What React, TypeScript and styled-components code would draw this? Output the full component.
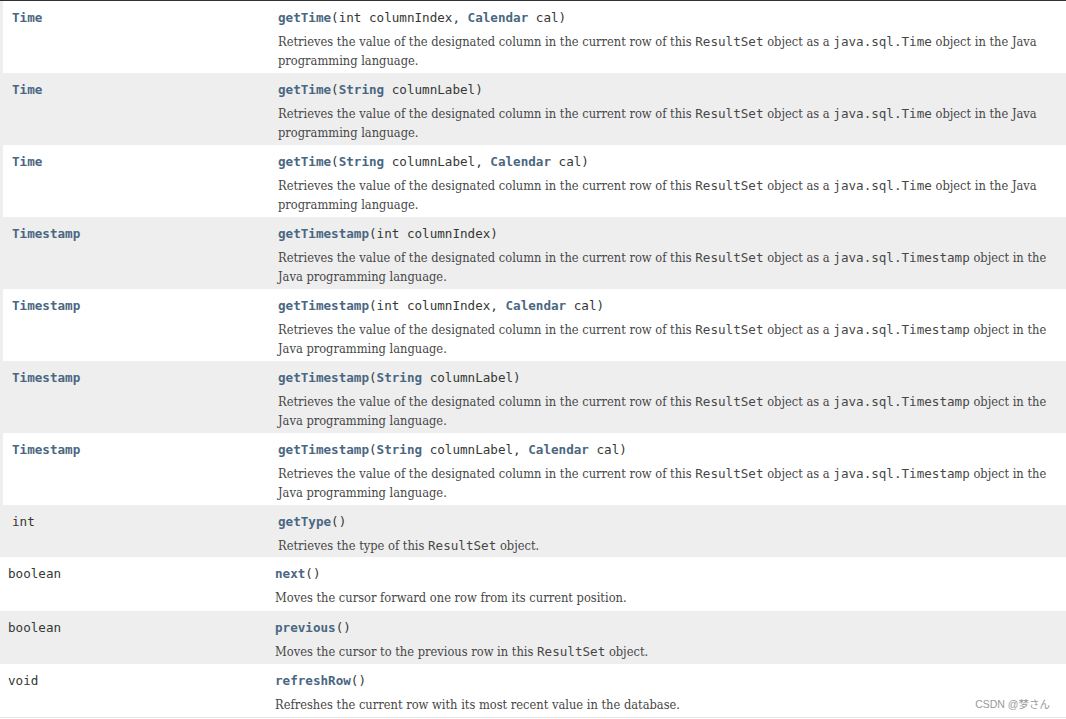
import React from "react";
import styled, { createGlobalStyle } from "styled-components";

const Global = createGlobalStyle`
  html, body { margin: 0; padding: 0; background: #ffffff; }
  body { width: 1066px; height: 719px; overflow: hidden; }
`;

const Page = styled.div`
  position: relative;
  width: 1066px;
  height: 719px;
  background: #ffffff;
  border-top: 1px solid #2f3133;
  box-sizing: border-box;
`;

const Section = styled.div<{ $strip?: boolean }>`
  display: flex;
  flex-direction: column;
  border-left: ${(p) => (p.$strip ? "3px solid #eeeeef" : "none")};
`;

const Row = styled.div<{ $alt: boolean; $h: number; $pl: number; $col: number }>`
  display: grid;
  grid-template-columns: ${(p) => p.$col}px 1fr;
  height: ${(p) => p.$h}px;
  box-sizing: border-box;
  padding: 8px 14px 0 ${(p) => p.$pl}px;
  background: ${(p) => (p.$alt ? "#eeeeef" : "#ffffff")};
`;

const Code = styled.div`
  font-family: "DejaVu Sans Mono", monospace;
  font-size: 12.6px;
  line-height: 18px;
  color: #353833;
  white-space: nowrap;
`;

const Link = styled.span`
  color: #4a6782;
  font-weight: bold;
`;

const Block = styled.div`
  margin-top: 5px;
  font-family: "DejaVu Serif Condensed", "DejaVu Serif", Georgia, serif;
  font-stretch: semi-condensed;
  font-size: 12.75px;
  line-height: 19px;
  color: #474747;
`;

const Inline = styled.code`
  font-family: "DejaVu Sans Mono", monospace;
  font-stretch: normal;
  font-size: 12.6px;
  color: #474747;
`;

const Bottom = styled.div`
  border-bottom: 1px solid #e6e6e6;
`;

const Watermark = styled.div`
  position: absolute;
  right: 16px;
  bottom: 8px;
  font-family: "Liberation Sans", "Noto Sans CJK SC", sans-serif;
  font-size: 10.5px;
  color: #9a9a9a;
`;

type Param = { t: string; link?: boolean; n: string };
type Item = {
  type: string;
  typeLink?: boolean;
  name: string;
  params: Param[];
  desc: React.ReactNode;
};

const timeDesc = (
  <>
    Retrieves the value of the designated column in the current row of this <Inline>ResultSet</Inline> object as a{" "}
    <Inline>java.sql.Time</Inline> object in the Java programming language.
  </>
);
const tsDesc = (
  <>
    Retrieves the value of the designated column in the current row of this <Inline>ResultSet</Inline> object as a{" "}
    <Inline>java.sql.Timestamp</Inline> object in the Java programming language.
  </>
);

const upper: Item[] = [
  { type: "Time", typeLink: true, name: "getTime", params: [{ t: "int", n: "columnIndex" }, { t: "Calendar", link: true, n: "cal" }], desc: timeDesc },
  { type: "Time", typeLink: true, name: "getTime", params: [{ t: "String", link: true, n: "columnLabel" }], desc: timeDesc },
  { type: "Time", typeLink: true, name: "getTime", params: [{ t: "String", link: true, n: "columnLabel" }, { t: "Calendar", link: true, n: "cal" }], desc: timeDesc },
  { type: "Timestamp", typeLink: true, name: "getTimestamp", params: [{ t: "int", n: "columnIndex" }], desc: tsDesc },
  { type: "Timestamp", typeLink: true, name: "getTimestamp", params: [{ t: "int", n: "columnIndex" }, { t: "Calendar", link: true, n: "cal" }], desc: tsDesc },
  { type: "Timestamp", typeLink: true, name: "getTimestamp", params: [{ t: "String", link: true, n: "columnLabel" }], desc: tsDesc },
  { type: "Timestamp", typeLink: true, name: "getTimestamp", params: [{ t: "String", link: true, n: "columnLabel" }, { t: "Calendar", link: true, n: "cal" }], desc: tsDesc },
  { type: "int", name: "getType", params: [], desc: <>Retrieves the type of this <Inline>ResultSet</Inline> object.</> },
];

const lower: Item[] = [
  { type: "boolean", name: "next", params: [], desc: <>Moves the cursor forward one row from its current position.</> },
  { type: "boolean", name: "previous", params: [], desc: <>Moves the cursor to the previous row in this <Inline>ResultSet</Inline> object.</> },
  { type: "void", name: "refreshRow", params: [], desc: <>Refreshes the current row with its most recent value in the database.</> },
];

function Signature({ item }: { item: Item }) {
  return (
    <Code>
      <Link>{item.name}</Link>(
      {item.params.map((p, i) => (
        <React.Fragment key={i}>
          {i > 0 ? ", " : ""}
          {p.link ? <Link>{p.t}</Link> : p.t} {p.n}
        </React.Fragment>
      ))}
      )
    </Code>
  );
}

function MemberRow({ item, alt, h, pl, col }: { item: Item; alt: boolean; h: number; pl: number; col: number }) {
  return (
    <Row $alt={alt} $h={h} $pl={pl} $col={col}>
      <Code>{item.typeLink ? <Link>{item.type}</Link> : item.type}</Code>
      <div>
        <Signature item={item} />
        <Block>{item.desc}</Block>
      </div>
    </Row>
  );
}

export default function App() {
  return (
    <>
      <Global />
      <Page>
        <Section $strip>
          {upper.map((it, i) => (
            <MemberRow key={i} item={it} alt={i % 2 === 1} h={i === upper.length - 1 ? 52 : 72} pl={9} col={266} />
          ))}
        </Section>
        <Bottom>
          <Section>
            {lower.map((it, i) => (
              <MemberRow key={i} item={it} alt={i % 2 === 1} h={i === 0 ? 54 : 53} pl={8} col={267} />
            ))}
          </Section>
        </Bottom>
        <Watermark>CSDN @梦さん</Watermark>
      </Page>
    </>
  );
}
